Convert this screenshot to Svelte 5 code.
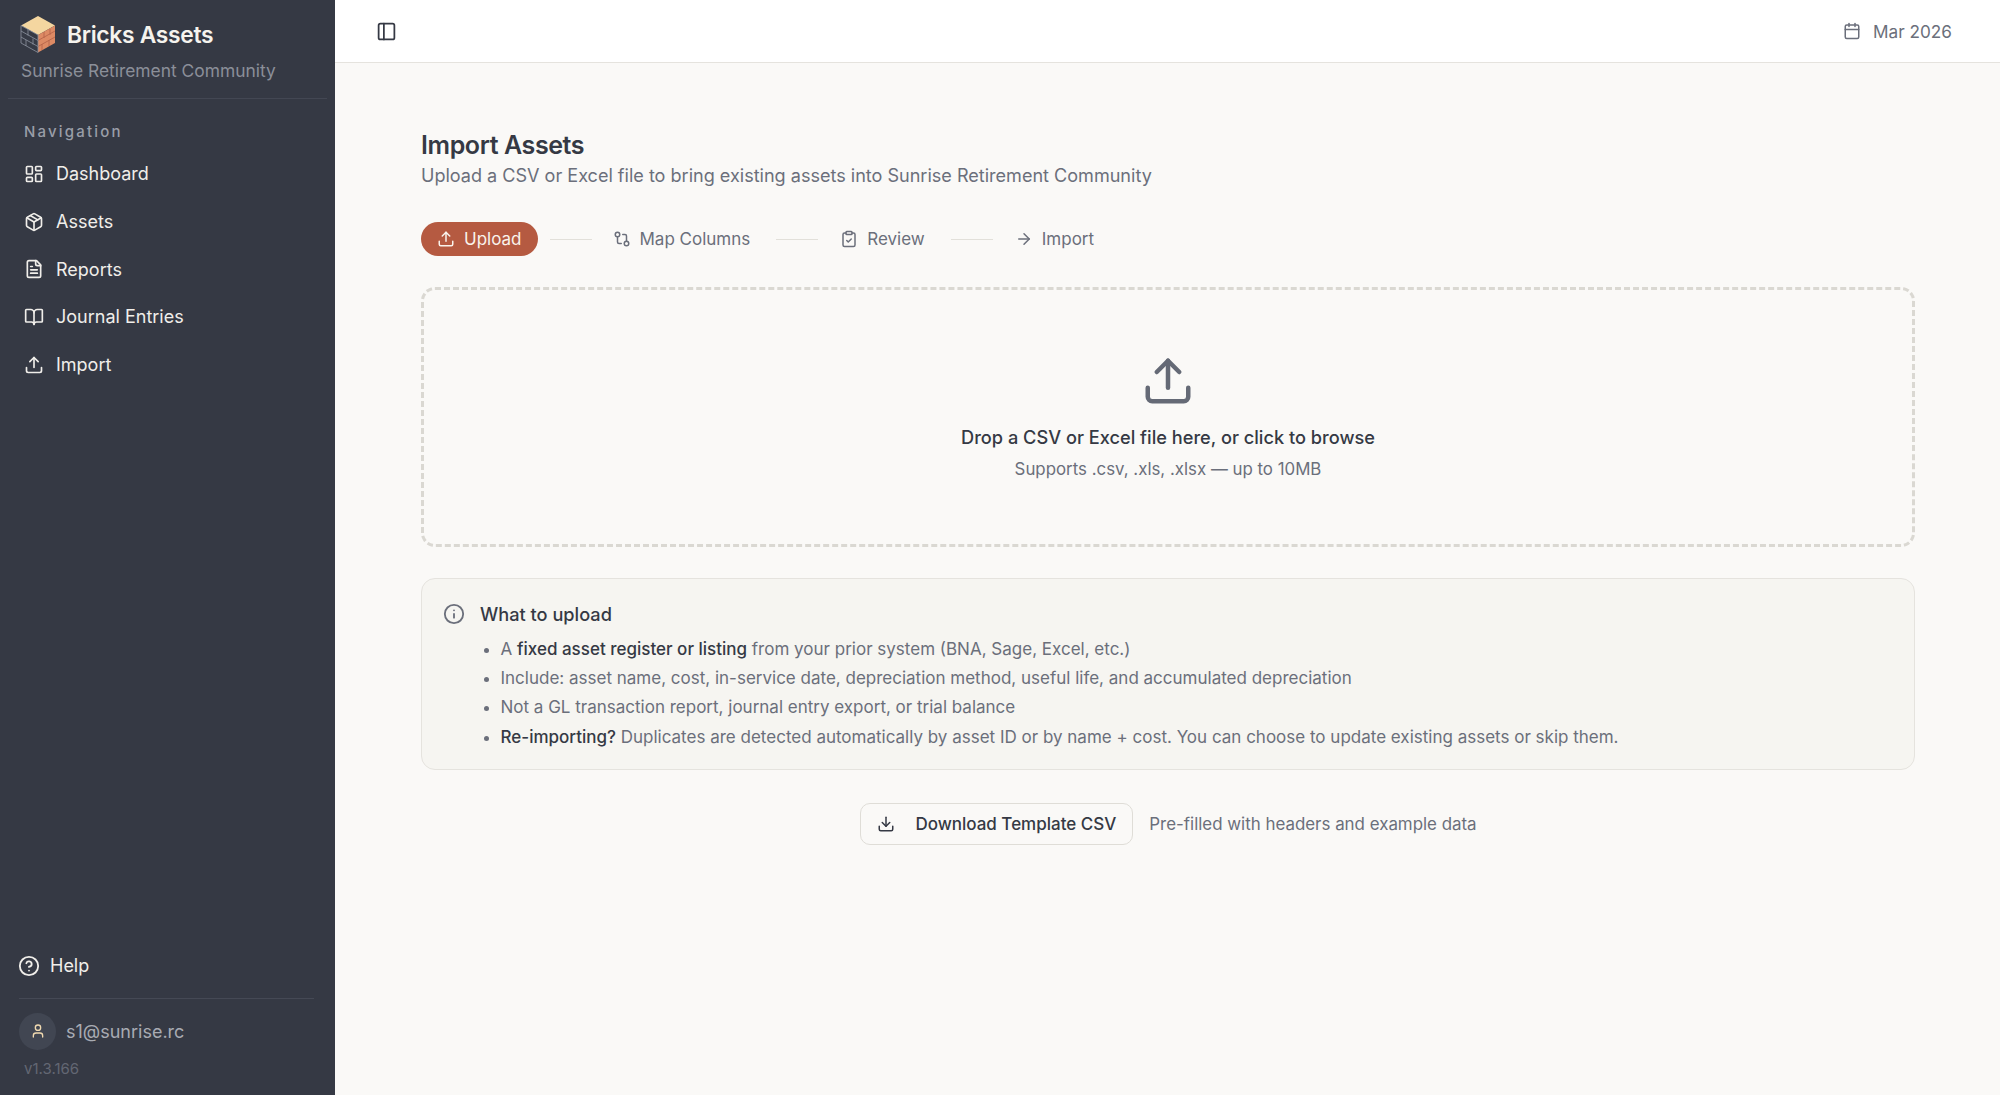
<script lang="ts">
  const nav = [
    { label: "Dashboard", icon: "dash" },
    { label: "Assets", icon: "box" },
    { label: "Reports", icon: "doc" },
    { label: "Journal Entries", icon: "book" },
    { label: "Import", icon: "upload" }
  ];
  const steps = [
    { label: "Map Columns", icon: "route" },
    { label: "Review", icon: "clip" },
    { label: "Import", icon: "arrow" }
  ];
</script>

{#snippet icon(name: string)}
  <svg viewBox="0 0 24 24" fill="none" stroke="currentColor" stroke-width="2" stroke-linecap="round" stroke-linejoin="round" aria-hidden="true">
    {#if name === "dash"}
      <rect x="3" y="3" width="7" height="9" rx="1" /><rect x="14" y="3" width="7" height="5" rx="1" /><rect x="14" y="12" width="7" height="9" rx="1" /><rect x="3" y="16" width="7" height="5" rx="1" />
    {:else if name === "box"}
      <path d="M21 8a2 2 0 0 0-1-1.73l-7-4a2 2 0 0 0-2 0l-7 4A2 2 0 0 0 3 8v8a2 2 0 0 0 1 1.73l7 4a2 2 0 0 0 2 0l7-4A2 2 0 0 0 21 16Z" /><path d="m3.3 7 8.7 5 8.7-5" /><path d="M12 22V12" /><path d="m7.5 4.27 9 5.15" />
    {:else if name === "doc"}
      <path d="M15 2H6a2 2 0 0 0-2 2v16a2 2 0 0 0 2 2h12a2 2 0 0 0 2-2V7Z" /><path d="M14 2v4a2 2 0 0 0 2 2h4" /><path d="M10 9H8" /><path d="M16 13H8" /><path d="M16 17H8" />
    {:else if name === "book"}
      <path d="M12 7v14" /><path d="M3 18a1 1 0 0 1-1-1V4a1 1 0 0 1 1-1h5a4 4 0 0 1 4 4 4 4 0 0 1 4-4h5a1 1 0 0 1 1 1v13a1 1 0 0 1-1 1h-6a3 3 0 0 0-3 3 3 3 0 0 0-3-3z" />
    {:else if name === "upload"}
      <path d="M21 15v4a2 2 0 0 1-2 2H5a2 2 0 0 1-2-2v-4" /><polyline points="17 8 12 3 7 8" /><line x1="12" x2="12" y1="3" y2="15" />
    {:else if name === "download"}
      <path d="M21 15v4a2 2 0 0 1-2 2H5a2 2 0 0 1-2-2v-4" /><polyline points="7 10 12 15 17 10" /><line x1="12" x2="12" y1="15" y2="3" />
    {:else if name === "route"}
      <circle cx="18" cy="18" r="3" /><circle cx="6" cy="6" r="3" /><path d="M13 6h3a2 2 0 0 1 2 2v7" /><path d="M11 18H8a2 2 0 0 1-2-2V9" />
    {:else if name === "clip"}
      <rect width="8" height="4" x="8" y="2" rx="1" /><path d="M16 4h2a2 2 0 0 1 2 2v14a2 2 0 0 1-2 2H6a2 2 0 0 1-2-2V6a2 2 0 0 1 2-2h2" /><path d="m9 14 2 2 4-4" />
    {:else if name === "arrow"}
      <path d="M5 12h14" /><path d="m12 5 7 7-7 7" />
    {:else if name === "panel"}
      <rect width="18" height="18" x="3" y="3" rx="2" /><path d="M9 3v18" />
    {:else if name === "cal"}
      <path d="M8 2v4" /><path d="M16 2v4" /><rect width="18" height="18" x="3" y="4" rx="2" /><path d="M3 10h18" />
    {:else if name === "help"}
      <circle cx="12" cy="12" r="10" /><path d="M9.09 9a3 3 0 0 1 5.83 1c0 2-3 3-3 3" /><path d="M12 17h.01" />
    {:else if name === "info"}
      <circle cx="12" cy="12" r="10" /><path d="M12 16v-4" /><path d="M12 8h.01" />
    {:else if name === "user"}
      <path d="M19 21v-2a4 4 0 0 0-4-4H9a4 4 0 0 0-4 4v2" /><circle cx="12" cy="7" r="4" />
    {/if}
  </svg>
{/snippet}

<div class="shell">
  <aside class="sidebar">
    <div class="brand">
      <div class="brand-row">
        <svg class="logo" viewBox="0 0 36 38" aria-hidden="true">
          <path d="M18 1 35 10.5 18 20 1 10.5Z" fill="#f4d6a0" />
          <path d="M18 20 35 10.5V28L18 37.5Z" fill="#dd8a64" />
          <path d="M18 20 1 10.5V28L18 37.5Z" fill="#363a45" />
          <path d="M18 25.5 35 16M18 31.5 35 22M24 17v6M30 14v6M22 29v6M29 25v6" stroke="#b8654a" stroke-width="0.9" fill="none" />
          <path d="M18 20 1 10.5V28L18 37.5ZM1 16l17 9.5M1 22l17 9.5M8 14.5v6M13 23.5v6M6 25v6" stroke="#8d93a0" stroke-width="0.8" fill="none" />
        </svg>
        <span class="brand-name">Bricks Assets</span>
      </div>
      <div class="brand-org">Sunrise Retirement Community</div>
    </div>

    <div class="nav-label">Navigation</div>
    <nav class="nav">
      {#each nav as item}
        <div class="nav-item"><span class="nav-icon">{@render icon(item.icon)}</span>{item.label}</div>
      {/each}
    </nav>

    <div class="side-foot">
      <div class="help"><span class="help-icon">{@render icon("help")}</span>Help</div>
      <div class="account">
        <span class="avatar">{@render icon("user")}</span>
        <span class="email">s1@sunrise.rc</span>
      </div>
      <div class="version">v1.3.166</div>
    </div>
  </aside>

  <div class="main">
    <header class="topbar">
      <span class="panel-icon">{@render icon("panel")}</span>
      <div class="period"><span class="cal-icon">{@render icon("cal")}</span>Mar 2026</div>
    </header>

    <main class="content">
      <h1>Import Assets</h1>
      <p class="subtitle">Upload a CSV or Excel file to bring existing assets into Sunrise Retirement Community</p>

      <div class="steps">
        <div class="step active"><span class="step-icon">{@render icon("upload")}</span>Upload</div>
        {#each steps as step, i}
          <span class="step-line" class:first={i === 0}></span>
          <div class="step"><span class="step-icon">{@render icon(step.icon)}</span>{step.label}</div>
        {/each}
      </div>

      <div class="dropzone">
        <span class="drop-icon">{@render icon("upload")}</span>
        <div class="drop-title">Drop a CSV or Excel file here, or click to browse</div>
        <div class="drop-sub">Supports .csv, .xls, .xlsx — up to 10MB</div>
      </div>

      <section class="hint">
        <span class="info-icon">{@render icon("info")}</span>
        <div class="hint-body">
          <div class="hint-title">What to upload</div>
          <ul>
            <li>A <strong>fixed asset register or listing</strong> from your prior system (BNA, Sage, Excel, etc.)</li>
            <li>Include: asset name, cost, in-service date, depreciation method, useful life, and accumulated depreciation</li>
            <li>Not a GL transaction report, journal entry export, or trial balance</li>
            <li><strong>Re-importing?</strong> Duplicates are detected automatically by asset ID or by name + cost. You can choose to update existing assets or skip them.</li>
          </ul>
        </div>
      </section>

      <div class="template">
        <button type="button" class="template-btn"><span class="dl-icon">{@render icon("download")}</span>Download Template CSV</button>
        <span class="template-note">Pre-filled with headers and example data</span>
      </div>
    </main>
  </div>
</div>

<style>
  :global(body) {
    font-family: Inter, "Liberation Sans", sans-serif;
    background: #faf9f7;
  }

  svg {
    display: block;
    width: 100%;
    height: 100%;
  }

  .shell {
    display: flex;
    height: 1095px;
    overflow: hidden;
  }

  .sidebar {
    width: 335px;
    flex: none;
    display: flex;
    flex-direction: column;
    background: #353944;
    color: #f2f0ec;
    padding: 0 8px;
    box-sizing: border-box;
  }

  .brand {
    height: 99px;
    box-sizing: border-box;
    padding: 15px 12px 0;
    border-bottom: 1px solid #434753;
  }

  .brand-row {
    display: flex;
    align-items: center;
    gap: 11px;
    height: 38px;
  }

  .logo {
    width: 36px;
    height: 38px;
    flex: none;
  }

  .brand-name {
    font-size: 22.8px;
    font-weight: 600;
    letter-spacing: -0.3px;
    color: #f5f3ee;
    padding-top: 1px;
  }

  .brand-org {
    margin-top: 7px;
    padding-left: 1px;
    font-size: 17.4px;
    color: #8b8f99;
  }

  .nav-label {
    margin: 24px 0 0 16px;
    font-size: 15px;
    font-weight: 500;
    letter-spacing: 2.2px;
    color: #9a9ea8;
    line-height: 18px;
  }

  .nav {
    margin-top: 9px;
    display: flex;
    flex-direction: column;
  }

  .nav-item {
    height: 47.7px;
    display: flex;
    align-items: center;
    gap: 12px;
    padding-left: 16px;
    font-size: 18px;
    color: #f0eeea;
  }

  .nav-icon {
    width: 20px;
    height: 20px;
    flex: none;
  }

  .side-foot {
    margin-top: auto;
    padding: 0 13px 17px 12px;
  }

  .help {
    display: flex;
    align-items: center;
    gap: 10px;
    height: 40px;
    font-size: 18px;
    color: #f0eeea;
    margin-left: -2px;
  }

  .help-icon {
    width: 22px;
    height: 22px;
    flex: none;
  }

  .account {
    margin-top: 12px;
    margin-left: -1px;
    padding-top: 14px;
    border-top: 1px solid #454955;
    display: flex;
    align-items: center;
    gap: 10px;
  }

  .avatar {
    width: 37px;
    height: 37px;
    border-radius: 50%;
    background: #414652;
    color: #f0d9b0;
    display: flex;
    align-items: center;
    justify-content: center;
    flex: none;
  }

  .avatar svg {
    width: 16px;
    height: 16px;
  }

  .email {
    font-size: 18px;
    color: #a8abb3;
  }

  .version {
    margin: 9.5px 0 0 4px;
    font-size: 15px;
    color: #636773;
  }

  .main {
    flex: 1;
    min-width: 0;
    display: flex;
    flex-direction: column;
  }

  .topbar {
    height: 63px;
    flex: none;
    box-sizing: border-box;
    background: #fff;
    border-bottom: 1px solid #e5e3de;
    display: flex;
    align-items: center;
    justify-content: space-between;
    padding: 0 48px 0 41px;
  }

  .panel-icon {
    width: 21px;
    height: 21px;
    color: #353944;
  }

  .period {
    display: flex;
    align-items: center;
    gap: 12px;
    font-size: 17.2px;
    color: #6b6f7b;
  }

  .cal-icon {
    width: 18px;
    height: 18px;
  }

  .content {
    padding: 65px 85px 0 86px;
    flex: 1;
  }

  h1 {
    margin: 0;
    font-size: 25px;
    line-height: 34px;
    font-weight: 600;
    letter-spacing: -0.4px;
    color: #353944;
  }

  .subtitle {
    margin: 2px 0 0;
    font-size: 18.06px;
    line-height: 24px;
    color: #6b6f7b;
  }

  .steps {
    margin-top: 34px;
    display: flex;
    align-items: center;
    font-size: 17px;
    color: #6b6f7b;
    height: 34px;
  }

  .step {
    display: flex;
    align-items: center;
    gap: 9px;
    padding: 0 16px;
    height: 34px;
    border-radius: 17px;
  }

  .step.active {
    background: #b55a41;
    color: #f9f3ec;
    margin-right: 2px;
  }

  .step-icon {
    width: 18px;
    height: 18px;
  }

  .step-line {
    width: 42px;
    height: 1px;
    background: #e2e0da;
    margin: 0 6px 0 10px;
  }

  .step-line.first {
    margin-right: 5px;
  }

  .dropzone {
    margin-top: 31px;
    height: 260px;
    box-sizing: border-box;
    border: 3px dashed #dad8d2;
    border-radius: 14px;
    display: flex;
    flex-direction: column;
    align-items: center;
    padding-top: 64px;
  }

  .drop-icon {
    width: 54px;
    height: 54px;
    color: #656a76;
  }

  .drop-title {
    margin-top: 16px;
    font-size: 18.2px;
    font-weight: 500;
    line-height: 26px;
    color: #353944;
  }

  .drop-sub {
    margin-top: 7px;
    font-size: 16.85px;
    line-height: 24px;
    color: #6b6f7b;
  }

  .hint {
    margin-top: 31px;
    height: 192px;
    box-sizing: border-box;
    border: 1px solid #e5e3de;
    border-radius: 14px;
    background: #f6f5f1;
    display: flex;
    gap: 15px;
    padding: 22px 22px 0 21px;
  }

  .info-icon {
    width: 22px;
    height: 22px;
    flex: none;
    margin-top: 2px;
    color: #6b6f7b;
  }

  .hint-title {
    font-size: 18.2px;
    font-weight: 500;
    line-height: 26px;
    color: #353944;
  }

  ul {
    margin: 7.5px 0 0;
    padding: 0 0 0 20.5px;
    font-size: 17px;
    line-height: 29.4px;
    color: #6b6f7b;
  }

  strong {
    font-weight: 500;
    color: #353944;
  }

  .template {
    margin-top: 33px;
    display: flex;
    justify-content: center;
    align-items: center;
    gap: 16px;
    padding-left: 1px;
  }

  .template-btn {
    appearance: none;
    height: 42px;
    box-sizing: border-box;
    padding: 0 16px;
    border: 1px solid #dfddd7;
    border-radius: 10px;
    background: #faf9f7;
    display: flex;
    align-items: center;
    gap: 20px;
    font: 500 17px Inter, sans-serif;
    color: #353944;
  }

  .dl-icon {
    width: 18px;
    height: 18px;
  }

  .template-note {
    font-size: 16.9px;
    color: #6b6f7b;
  }
</style>
